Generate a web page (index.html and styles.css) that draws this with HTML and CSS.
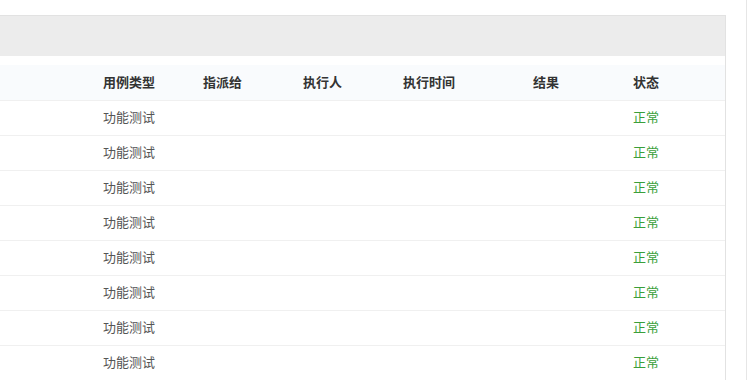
FILE: index.html
```html
<!DOCTYPE html>
<html lang="zh">
<head>
<meta charset="utf-8">
<link rel="stylesheet" href="styles.css">
</head>
<body>
<div class="page">
  <div class="panel">
    <div class="toolbar"></div>
    <div class="table">
      <div class="row head">
        <div></div><div>用例类型</div><div>指派给</div><div>执行人</div><div>执行时间</div><div>结果</div><div>状态</div>
      </div>
      <div class="row"><div></div><div class="type">功能测试</div><div></div><div></div><div></div><div></div><div class="ok">正常</div></div>
      <div class="row"><div></div><div class="type">功能测试</div><div></div><div></div><div></div><div></div><div class="ok">正常</div></div>
      <div class="row"><div></div><div class="type">功能测试</div><div></div><div></div><div></div><div></div><div class="ok">正常</div></div>
      <div class="row"><div></div><div class="type">功能测试</div><div></div><div></div><div></div><div></div><div class="ok">正常</div></div>
      <div class="row"><div></div><div class="type">功能测试</div><div></div><div></div><div></div><div></div><div class="ok">正常</div></div>
      <div class="row"><div></div><div class="type">功能测试</div><div></div><div></div><div></div><div></div><div class="ok">正常</div></div>
      <div class="row"><div></div><div class="type">功能测试</div><div></div><div></div><div></div><div></div><div class="ok">正常</div></div>
      <div class="row"><div></div><div class="type">功能测试</div><div></div><div></div><div></div><div></div><div class="ok">正常</div></div>
    </div>
  </div>
  <div class="gutter"></div>
  <div class="track"></div>
</div>
</body>
</html>
```
FILE: styles.css
```css
html, body {
  margin: 0;
  padding: 0;
  background: #fff;
  height: 380px;
  overflow: hidden;
}
body {
  font-family: "Noto Sans CJK SC", "Noto Sans", sans-serif;
  font-size: 13px;
  color: #555;
}
.page {
  display: flex;
  height: 380px;
}
.panel {
  width: 725px;
  margin-top: 15px;
  border-top: 1px solid #e2e2e2;
  border-right: 1px solid #e2e2e2;
  flex: none;
}
.toolbar {
  height: 40px;
  background: #ececec;
}
.table {
  padding-top: 9px;
}
.row {
  display: grid;
  grid-template-columns: 103px 100px 100px 100px 130px 100px 1fr;
  height: 34px;
  border-bottom: 1px solid #f0f0f0;
  align-items: start;
  line-height: 32px;
}
.row.head {
  height: 35px;
  line-height: 33px;
  background: #f9fbfd;
  font-weight: bold;
  color: #333;
}
.row > div {
  white-space: nowrap;
}
.type {
  color: #555;
}
.ok {
  color: #3a9f3a;
}
.gutter {
  width: 20px;
  flex: none;
}
.track {
  flex: 1;
  border-left: 1px solid #e6e6e6;
}
```
